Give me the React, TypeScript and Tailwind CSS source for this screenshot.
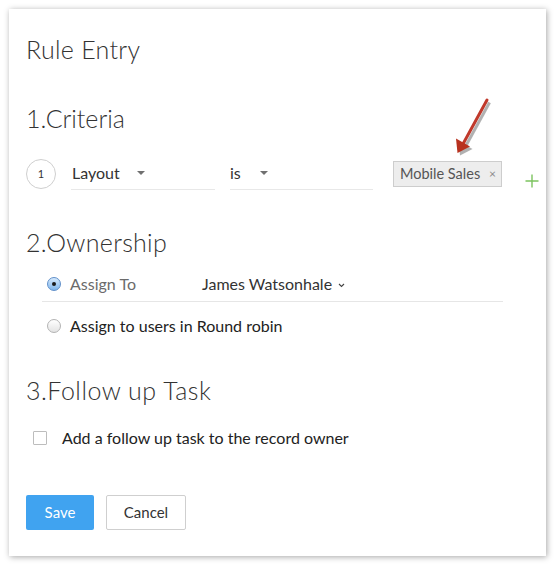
import React from "react";

const font = { fontFamily: "Lato, 'Open Sans', Arial, sans-serif" };

function Caret() {
  return (
    <span className="block w-0 h-0 border-l-[4px] border-r-[4px] border-t-[4px] border-l-transparent border-r-transparent border-t-[#707070]" />
  );
}

function Radio({ checked }: { checked?: boolean }) {
  return checked ? (
    <span className="flex items-center justify-center w-[14px] h-[14px] rounded-full border border-[#5f8fc9] bg-gradient-to-b from-[#d6eafd] to-[#7fb6ec] shrink-0">
      <span className="block w-[4px] h-[4px] rounded-full bg-[#1a1a1a]" />
    </span>
  ) : (
    <span className="block w-[14px] h-[14px] rounded-full border border-[#b3b3b3] bg-gradient-to-b from-[#ffffff] to-[#e3e3e3] shrink-0" />
  );
}

export default function App() {
  return (
    <div className="relative w-[555px] h-[566px] bg-white overflow-hidden" style={font}>
      <div className="ml-[9px] mt-[9px] w-[537px] h-[547px] bg-white shadow-[1px_1px_6px_rgba(0,0,0,0.35)] pl-[17px] flex flex-col">
        <div className="mt-[24px] h-[32px] leading-[32px] text-[25px] font-light tracking-[0.3px] text-[#333]">Rule Entry</div>

        <div className="mt-[37px] h-[32px] leading-[32px] text-[25px] font-light text-[#333]">1.Criteria</div>

        <div className="mt-[25px] flex items-start h-[31px]">
          <div className="w-[30px] h-[30px] rounded-full border border-[#cfcfcf] flex items-center justify-center text-[11px] text-[#333] shrink-0">
            1
          </div>
          <div className="ml-[15px] w-[144px] h-[31px] border-b border-[#e8e8e8] flex items-start">
            <span className="pl-[1px] leading-[28px] text-[16px] text-[#333]">Layout</span>
            <span className="ml-[17px] mt-[12px] flex"><Caret /></span>
          </div>
          <div className="ml-[15px] w-[143px] h-[31px] border-b border-[#e8e8e8] flex items-start">
            <span className="leading-[28px] text-[16px] text-[#333]">is</span>
            <span className="ml-[19px] mt-[12px] flex"><Caret /></span>
          </div>
          <div className="ml-[20px] mt-[2px] w-[109px] h-[26px] bg-[#ededed] border border-[#cdcdcd] flex items-center pl-[6px]">
            <span className="text-[14.5px] text-[#555] leading-[20px]">Mobile Sales</span>
            <span className="ml-auto mr-[5px] text-[12px] text-[#8a8a8a] leading-[12px]">×</span>
          </div>
          <svg className="ml-[23px] mt-[15px]" width="14" height="14" viewBox="0 0 14 14">
            <path d="M7 0.5V13.5M0.5 7H13.5" stroke="#7cc35f" strokeWidth="1.4" />
          </svg>
        </div>

        <div className="mt-[36px] h-[32px] leading-[32px] text-[25px] font-light tracking-[0.3px] text-[#333]">2.Ownership</div>

        <div className="ml-[16px] w-[461px] mt-[16px]">
          <div className="flex items-center h-[20px] box-content pb-[7px] border-b border-[#e6e6e6]">
            <span className="ml-[5px]"><Radio checked /></span>
            <span className="ml-[9px] w-[132px] text-[16px] leading-[20px] text-[#6b6b6b]">Assign To</span>
            <span className="text-[16px] leading-[20px] text-[#333]">James Watsonhale</span>
            <svg className="ml-[6px] mt-[2px]" width="7" height="5" viewBox="0 0 7 5">
              <path d="M1 1L3.5 3.5L6 1" fill="none" stroke="#444" strokeWidth="1.1" />
            </svg>
          </div>
          <div className="mt-[14px] flex items-center h-[20px]">
            <span className="ml-[5px]"><Radio /></span>
            <span className="ml-[9px] text-[16px] leading-[20px] text-[#222]">Assign to users in Round robin</span>
          </div>
        </div>

        <div className="mt-[38px] h-[32px] leading-[32px] text-[25px] font-light tracking-[0.5px] text-[#333]">3.Follow up Task</div>

        <div className="mt-[22px] flex items-center h-[20px]">
          <span className="block ml-[7px] w-[14px] h-[14px] border border-[#bdbdbd] bg-white rounded-[1px] shrink-0" />
          <span className="ml-[15px] text-[16px] leading-[20px] text-[#222]">Add a follow up task to the record owner</span>
        </div>

        <div className="mt-[47px] flex items-start">
          <button className="w-[68px] h-[35px] bg-[#40a3f0] rounded-[2px] text-white text-[15px]">Save</button>
          <button className="ml-[12px] w-[80px] h-[35px] bg-white border border-[#cfcfcf] rounded-[2px] text-[#333] text-[15px]">Cancel</button>
        </div>
      </div>

      <svg className="absolute left-[448px] top-[94px]" width="50" height="66" viewBox="448 94 50 66">
        <g transform="translate(2.5,2.5)" opacity="0.45">
          <line x1="487" y1="100" x2="463" y2="144" stroke="#555" strokeWidth="3" />
          <polygon points="457.5,153 456,138.5 470,146.5" fill="#555" />
        </g>
        <line x1="487" y1="100" x2="463" y2="144" stroke="#c0392b" strokeWidth="3" strokeLinecap="round" />
        <polygon points="457.5,153 456,138.5 470,146.5" fill="#b8321f" />
      </svg>
    </div>
  );
}
